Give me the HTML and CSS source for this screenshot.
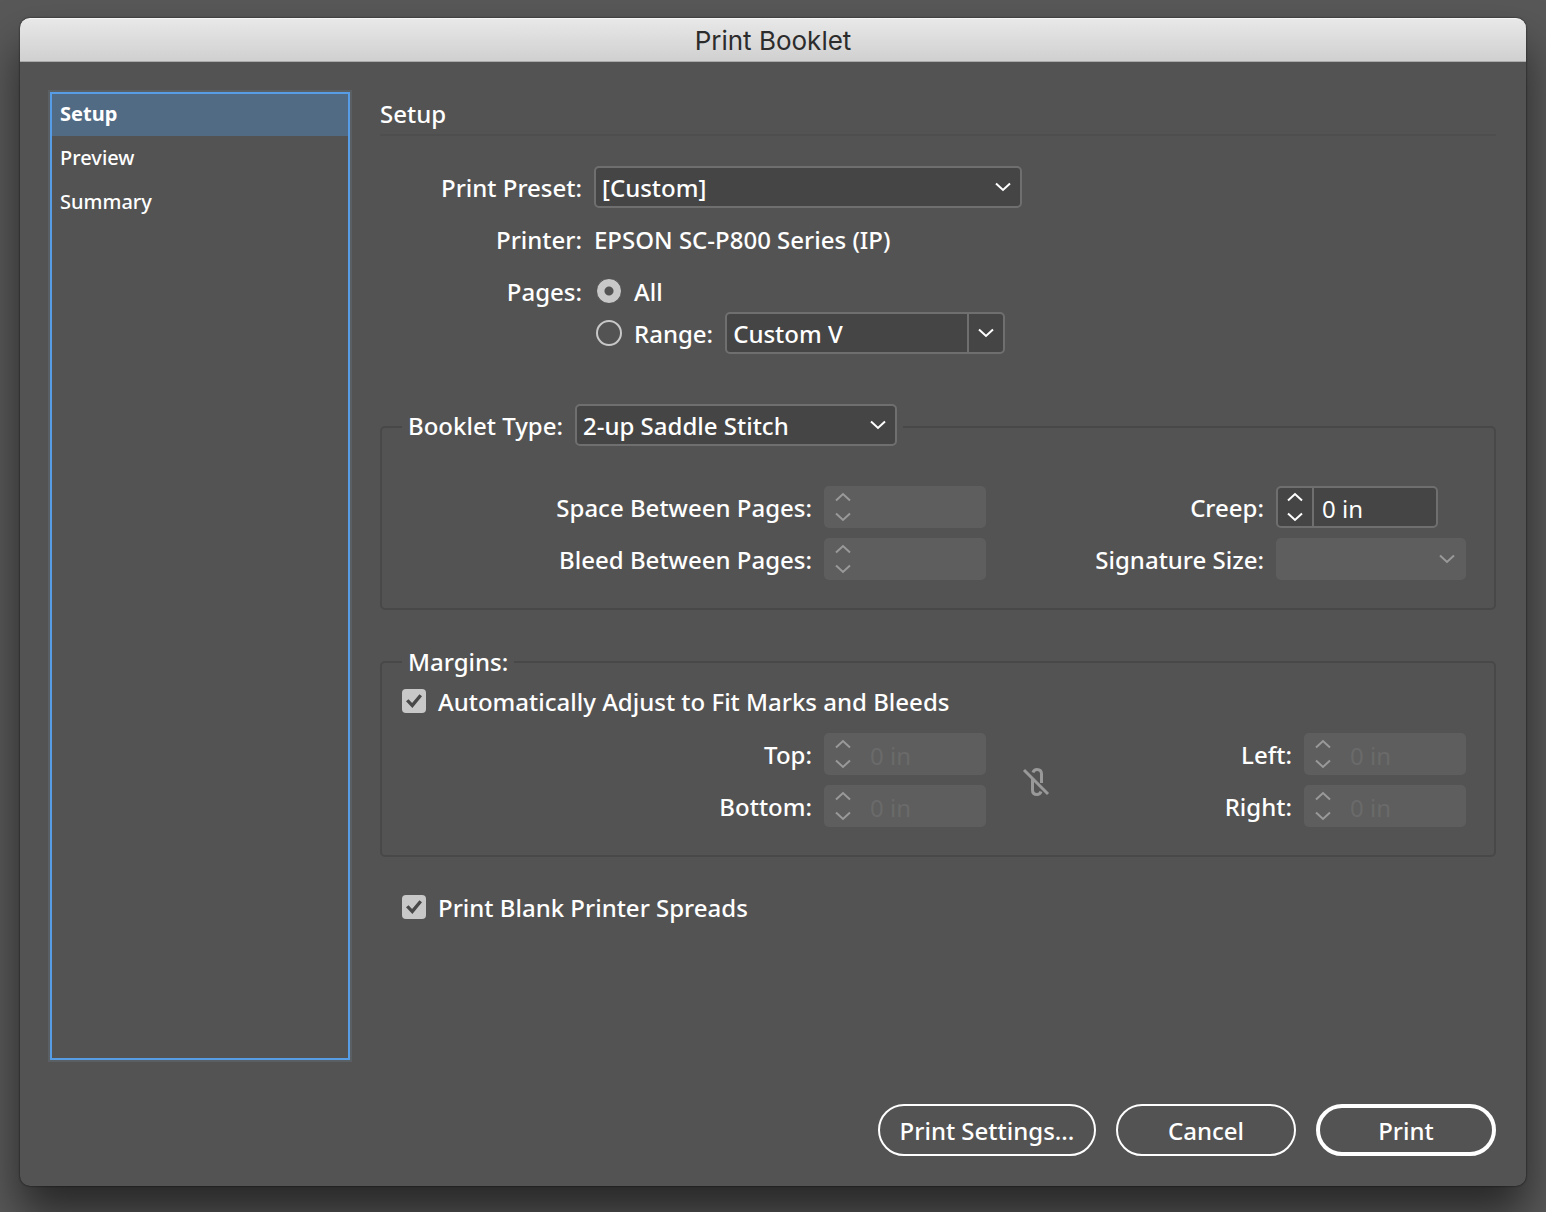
FILE: index.html
```html
<!DOCTYPE html>
<html lang="en">
<head>
<meta charset="utf-8">
<title>Print Booklet</title>
<link rel="stylesheet" href="styles.css">
</head>
<body>
<!-- shared icons -->
<svg class="sprite" aria-hidden="true">
 <symbol id="down" viewBox="0 0 16 10"><path d="M1 1.500 8 8l7-6.500"/></symbol>
 <symbol id="up" viewBox="0 0 16 10"><path d="M1 8.500 8 2l7 6.500"/></symbol>
</svg>
<form class="dialog">
 <header class="titlebar"><h1>Print Booklet</h1></header>
 <div class="content">
 <nav class="sidebar">
 <button type="button" class="tab active">Setup</button>
 <button type="button" class="tab">Preview</button>
 <button type="button" class="tab">Summary</button>
 </nav>
 <main class="panel">
 <h2>Setup</h2>
 <div class="settings">
 <label for="preset">Print Preset:</label>
 <div class="dropdown preset">
 <select id="preset"><option>[Custom]</option></select>
 <svg class="chevron"><use href="#down"/></svg>
 </div>
 <span>Printer:</span>
 <span class="value">EPSON SC-P800 Series (IP)</span>
 <span>Pages:</span>
 <div class="choice">
 <input type="radio" id="all" name="pages" checked>
 <label for="all">All</label>
 </div>
 <div class="choice range">
 <input type="radio" id="range" name="pages">
 <label for="range">Range:</label>
 <div class="combo">
 <input type="text" value="Custom V" aria-label="Page range">
 <button type="button" aria-label="Show ranges"><svg class="chevron"><use href="#down"/></svg></button>
 </div>
 </div>
 </div>

 <fieldset class="booklet">
 <legend>
 <label for="type">Booklet Type:</label>
 <span class="dropdown type">
 <select id="type"><option>2-up Saddle Stitch</option></select>
 <svg class="chevron"><use href="#down"/></svg>
 </span>
 </legend>
 <div class="fields">
 <label for="space">Space Between Pages:</label>
 <div class="stepper disabled">
 <div class="arrows">
 <button type="button" disabled aria-label="Increase"><svg class="chevron"><use href="#up"/></svg></button>
 <button type="button" disabled aria-label="Decrease"><svg class="chevron"><use href="#down"/></svg></button>
 </div>
 <input type="text" id="space" disabled>
 </div>
 <label for="creep">Creep:</label>
 <div class="stepper">
 <div class="arrows">
 <button type="button" aria-label="Increase"><svg class="chevron"><use href="#up"/></svg></button>
 <button type="button" aria-label="Decrease"><svg class="chevron"><use href="#down"/></svg></button>
 </div>
 <input type="text" id="creep" value="0 in">
 </div>
 <label for="bleed">Bleed Between Pages:</label>
 <div class="stepper disabled">
 <div class="arrows">
 <button type="button" disabled aria-label="Increase"><svg class="chevron"><use href="#up"/></svg></button>
 <button type="button" disabled aria-label="Decrease"><svg class="chevron"><use href="#down"/></svg></button>
 </div>
 <input type="text" id="bleed" disabled>
 </div>
 <label for="signature">Signature Size:</label>
 <div class="dropdown disabled">
 <select id="signature" disabled></select>
 <svg class="chevron"><use href="#down"/></svg>
 </div>
 </div>
 </fieldset>

 <fieldset class="margins">
 <legend>Margins:</legend>
 <div class="choice">
 <input type="checkbox" id="auto" checked>
 <label for="auto">Automatically Adjust to Fit Marks and Bleeds</label>
 </div>
 <div class="fields">
 <label for="top">Top:</label>
 <div class="stepper disabled">
 <div class="arrows">
 <button type="button" disabled aria-label="Increase"><svg class="chevron"><use href="#up"/></svg></button>
 <button type="button" disabled aria-label="Decrease"><svg class="chevron"><use href="#down"/></svg></button>
 </div>
 <input type="text" id="top" value="0 in" disabled>
 </div>
 <button type="button" class="link" disabled aria-label="Make all settings the same">
 <svg viewBox="0 0 28 32">
 <path d="M11 6.500Q12 3.500 15 3.500q4.500 0 4.500 4.500v9M10.500 12.500V24q0 4.500 4.500 4.500 3 0 4-3"/>
 <path class="slash" d="M2 4l24 24"/>
 </svg>
 </button>
 <label for="left">Left:</label>
 <div class="stepper disabled">
 <div class="arrows">
 <button type="button" disabled aria-label="Increase"><svg class="chevron"><use href="#up"/></svg></button>
 <button type="button" disabled aria-label="Decrease"><svg class="chevron"><use href="#down"/></svg></button>
 </div>
 <input type="text" id="left" value="0 in" disabled>
 </div>
 <label for="bottom">Bottom:</label>
 <div class="stepper disabled">
 <div class="arrows">
 <button type="button" disabled aria-label="Increase"><svg class="chevron"><use href="#up"/></svg></button>
 <button type="button" disabled aria-label="Decrease"><svg class="chevron"><use href="#down"/></svg></button>
 </div>
 <input type="text" id="bottom" value="0 in" disabled>
 </div>
 <label for="right">Right:</label>
 <div class="stepper disabled">
 <div class="arrows">
 <button type="button" disabled aria-label="Increase"><svg class="chevron"><use href="#up"/></svg></button>
 <button type="button" disabled aria-label="Decrease"><svg class="chevron"><use href="#down"/></svg></button>
 </div>
 <input type="text" id="right" value="0 in" disabled>
 </div>
 </div>
 </fieldset>

 <div class="choice blank">
 <input type="checkbox" id="blank" checked>
 <label for="blank">Print Blank Printer Spreads</label>
 </div>
 </main>
 </div>
 <footer class="actions">
 <button type="button" class="wide">Print Settings...</button>
 <button type="button">Cancel</button>
 <button type="submit" class="primary">Print</button>
 </footer>
</form>
</body>
</html>
```
FILE: styles.css
```css
* {
box-sizing: border-box;
}
body {
margin: 0;
padding: 18px 20px 26px;
min-height: 100vh;
display: flex;
background: #585858;
color: #fff;
font-family: "Noto Sans", sans-serif;
font-size: 24px;
font-weight: 500;
line-height: 32px;
}
button, input, select {
font: inherit;
color: inherit;
margin: 0;
padding: 0;
border: 0;
background: none;
}
.sprite {
display: none;
}
.dialog {
flex: 1;
display: flex;
flex-direction: column;
background: #535353;
border-radius: 10px;
box-shadow: 0 0 2px rgba(0,0,0,.8), 0 28px 44px rgba(0,0,0,.55);
}
.titlebar {
height: 44px;
border-radius: 10px 10px 0 0;
background: linear-gradient(#e8e8e8, #d0d0d0);
border-top: 1px solid #f5f5f5;
border-bottom: 1px solid #aaa;
text-align: center;
color: #2c2c2c;
}
h1 {
margin: 0;
font: 400 26px/44px Inter, sans-serif;
}
.content {
flex: 1;
display: flex;
gap: 30px;
padding: 30px 30px 0;
}
.sidebar {
width: 300px;
display: flex;
flex-direction: column;
gap: 2px;
border: 2px solid #569de5;
outline: 2px solid #5a5f64;
}
.tab {
height: 42px;
padding: 0 8px 2px;
text-align: left;
font-size: 20px;
}
.tab.active {
background: #516b84;
font-weight: 700;
}
.panel {
flex: 1;
min-width: 0;
}
h2 {
margin: 0 0 30px;
height: 44px;
border-bottom: 2px solid #4e4e4e;
font-size: 24px;
font-weight: 500;
line-height: 44px;
}
.settings {
display: grid;
grid-template-columns: 202px 1fr;
grid-template-rows: 42px 42px 42px 42px;
gap: 10px 12px;
align-items: center;
}
.settings > label,
.settings > span,
.fields > label {
text-align: right;
white-space: nowrap;
padding-top: 2px;
}
.settings > .value {
text-align: left;
}
.settings > .range {
grid-column: 2;
margin-top: -20px;
}

/* drop-downs */
.dropdown {
position: relative;
display: block;
height: 42px;
}
.dropdown select {
width: 100%;
height: 42px;
padding: 2px 40px 0 6px;
appearance: none;
background: #454545;
border: 2px solid #6f6f6f;
border-radius: 5px;
}
.dropdown .chevron {
position: absolute;
right: 11px;
top: 16px;
pointer-events: none;
}
.dropdown.disabled select {
background: #5e5e5e;
border-color: #5e5e5e;
opacity: 1;
}
.preset {
width: 428px;
}
.type {
width: 322px;
}
.chevron {
display: block;
width: 16px;
height: 10px;
fill: none;
stroke: #fff;
stroke-width: 2;
}
.disabled .chevron {
stroke: #999;
}
.combo,
.stepper {
display: flex;
height: 42px;
background: #454545;
border: 2px solid #6f6f6f;
border-radius: 5px;
}
.combo {
width: 280px;
}
.combo input {
flex: 1;
min-width: 0;
padding: 2px 0 0 6px;
}
.combo button {
width: 36px;
border-left: 2px solid #6f6f6f;
}
.combo .chevron {
margin: auto;
}
.stepper {
width: 162px;
}
.arrows {
width: 36px;
display: flex;
flex-direction: column;
justify-content: center;
gap: 10px;
border-right: 2px solid #6f6f6f;
}
.arrows .chevron {
margin: 0 auto;
}
.stepper input {
flex: 1;
min-width: 0;
padding: 4px 0 0 8px;
font-weight: 400;
}
.stepper.disabled,
.stepper.disabled .arrows {
background: #5e5e5e;
border-color: #5e5e5e;
}
.stepper.disabled input {
color: #6a6a6a;
}

/* radios and tick boxes */
.choice {
display: flex;
align-items: center;
gap: 12px;
}
.choice label {
padding-top: 2px;
}
.choice input[type="radio"] {
appearance: none;
width: 26px;
height: 26px;
margin-left: 2px;
border: 2px solid #c8c8c8;
border-radius: 50%;
}
.choice input[type="radio"]:checked {
border: 1px solid #535353;
background: radial-gradient(circle, #535353 4px, #c8c8c8 5px);
}
.choice input[type="checkbox"] {
appearance: none;
width: 24px;
height: 24px;
border-radius: 4px;
background: #c8c8c8;
display: grid;
place-items: center;
}
.choice input[type="checkbox"]:checked::before {
content: "";
width: 16px;
height: 14px;
background: #484848;
clip-path: polygon(0 52%, 16% 38%, 38% 64%, 84% 2%, 100% 16%, 40% 100%);
}

fieldset {
min-width: 0;
margin: 0;
border: 2px solid #484848;
border-radius: 5px;
padding: 0 28px 28px 20px;
}
legend {
padding: 0 6px;
}
.booklet {
margin-top: 40px;
}
.booklet legend {
display: flex;
align-items: center;
gap: 12px;
padding-bottom: 4px;
}
.booklet legend label {
padding-top: 2px;
}
.booklet .fields {
grid-template-columns: 410px 162px 1fr 190px;
padding-top: 36px;
}
.fields {
display: grid;
grid-template-columns: 410px 162px 76px 1fr 162px;
gap: 10px 12px;
align-items: center;
}
.margins {
margin-top: 36px;
}
.margins .choice {
margin: 6px 0 15px;
}
.link {
grid-row: span 2;
padding-top: 4px;
}
.link svg {
display: block;
width: 28px;
height: 32px;
margin: 0 auto;
fill: none;
stroke: #999;
stroke-width: 3;
}
.blank {
margin: 33px 0 0 22px;
}

.actions {
display: flex;
justify-content: flex-end;
gap: 20px;
padding: 44px 30px 30px;
}
.actions button {
width: 180px;
height: 52px;
padding-top: 2px;
border: 2px solid #fff;
border-radius: 26px;
}
.actions .wide {
width: 218px;
}
.actions .primary {
border-width: 4px;
}
```
